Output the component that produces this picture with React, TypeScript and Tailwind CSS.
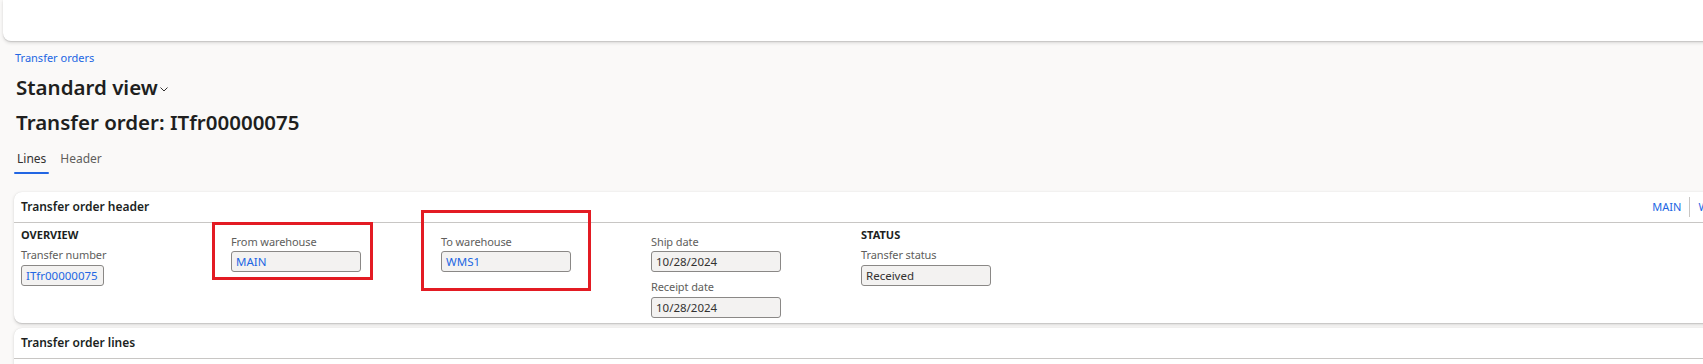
const font = { fontFamily: '"Noto Sans", "Open Sans", sans-serif' };

function Field({ label, value, link, width = "w-[130px]", top = "mt-[2px]" }: { label: string; value: string; link?: boolean; width?: string; top?: string }) {
  return (
    <div>
      <div className="text-[11px] leading-[16px] tracking-[-0.1px] text-[#605e5c]">{label}</div>
      <div
        className={`${top} ${width} h-[21px] rounded-[3px] border border-[#8a8886] bg-[#f3f2f1] px-[4px] text-[11.5px] leading-[19px] ${
          link ? "text-[#2266e3]" : "text-[#323130]"
        }`}
      >
        {value}
      </div>
    </div>
  );
}

export default function App() {
  return (
    <div className="w-[1703px] h-[364px] overflow-hidden bg-[#faf9f8]" style={font}>
      {/* top command bar */}
      <div className="ml-[3px] -mr-[20px] h-[41px] rounded-bl-[8px] bg-white shadow-[0_1.6px_3.6px_rgba(0,0,0,0.13),0_0.3px_0.9px_rgba(0,0,0,0.11)]" />

      <div className="pl-[14px]">
        <div className="ml-[1px] mt-[9px] text-[11px] leading-[16px] text-[#2266e3]">Transfer orders</div>

        <div className="ml-[2px] mt-[5px] flex items-center h-[32px]">
          <span className="text-[20.5px] font-semibold text-[#201f1e]">Standard view</span>
          <svg className="ml-[1px] mt-[4px]" width="10" height="10" viewBox="0 0 10 10">
            <path d="M1.5 3.5 L5 7 L8.5 3.5" fill="none" stroke="#323130" strokeWidth="1" />
          </svg>
        </div>

        <div className="ml-[2px] mt-[3px] h-[32px] text-[20.5px] font-semibold leading-[32px] text-[#201f1e]">Transfer order: ITfr00000075</div>

        <div className="mt-[11px] flex gap-[11px] text-[12px]">
          <div className="flex flex-col items-center">
            <span className="px-[3px] leading-[20px] text-[#323130]">Lines</span>
            <span className="mt-[3px] h-[2px] w-full rounded-full bg-[#2266e3]" />
          </div>
          <span className="leading-[20px] text-[#605e5c]">Header</span>
        </div>

        {/* header card */}
        <div className="relative mt-[18px] -mr-[40px] rounded-[8px] bg-white shadow-[0_1.6px_3.6px_rgba(0,0,0,0.13),0_0.3px_0.9px_rgba(0,0,0,0.11)]">
          <div className="flex h-[31px] items-center border-b border-[#c8c6c4] pl-[7px] pr-[12px]">
            <span className="text-[12px] font-semibold text-[#201f1e]">Transfer order header</span>
            <div className="ml-auto flex items-center text-[11px] text-[#2266e3]">
              <span>MAIN</span>
              <span className="mx-[8px] h-[20px] w-px bg-[#c8c6c4]" />
              <span>WMS1</span>
            </div>
          </div>

          <div className="grid grid-cols-[210px_210px_210px_210px_210px] pl-[7px] pt-[4px] pb-[5px]">
            <div>
              <div className="text-[11px] font-bold leading-[16px] text-[#201f1e]">OVERVIEW</div>
              <div className="mt-[4px]">
                <Field label="Transfer number" value="ITfr00000075" link width="w-[83px]" />
              </div>
            </div>
            <div className="pt-[7px]">
              <Field label="From warehouse" value="MAIN" link top="mt-[1px]" />
            </div>
            <div className="pt-[7px]">
              <Field label="To warehouse" value="WMS1" link top="mt-[1px]" />
            </div>
            <div className="pt-[7px] flex flex-col gap-[7px]">
              <Field label="Ship date" value="10/28/2024" top="mt-[1px]" />
              <Field label="Receipt date" value="10/28/2024" />
            </div>
            <div>
              <div className="text-[11px] font-bold leading-[16px] text-[#201f1e]">STATUS</div>
              <div className="mt-[4px]">
                <Field label="Transfer status" value="Received" />
              </div>
            </div>
          </div>

          {/* annotation boxes */}
          <div className="absolute left-[198px] top-[30px] h-[58px] w-[161px] border-[3px] border-[#e31b23]" />
          <div className="absolute left-[407px] top-[18px] h-[81px] w-[170px] border-[3px] border-[#e31b23]" />
        </div>

        {/* lines card */}
        <div className="mt-[5px] -mr-[40px] h-[60px] rounded-t-[8px] bg-white shadow-[0_1.6px_3.6px_rgba(0,0,0,0.13),0_0.3px_0.9px_rgba(0,0,0,0.11)]">
          <div className="flex h-[31px] items-center border-b border-[#c8c6c4] pl-[7px]">
            <span className="text-[12px] font-semibold text-[#201f1e]">Transfer order lines</span>
          </div>
        </div>
      </div>
    </div>
  );
}
